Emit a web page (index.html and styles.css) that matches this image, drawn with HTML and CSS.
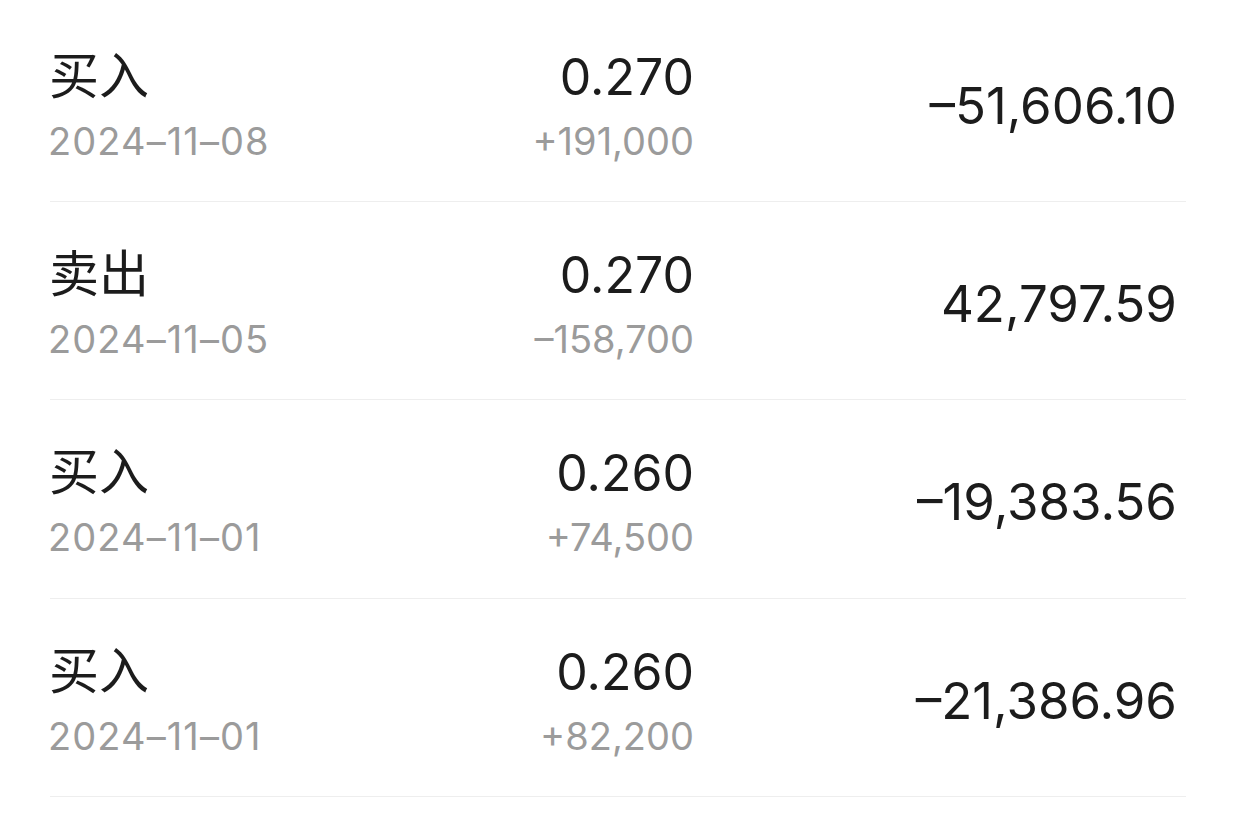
FILE: index.html
```html
<!DOCTYPE html>
<html lang="zh-CN">
<head>
<meta charset="utf-8">
<link rel="stylesheet" href="styles.css">
</head>
<body>
<div class="list">
  <div class="row">
    <div class="col-left">
      <div class="title">买入</div>
      <div class="sub date">2024–11–08</div>
    </div>
    <div class="col-mid">
      <div class="price">0.270</div>
      <div class="sub">+191,000</div>
    </div>
    <div class="col-right"><div class="amount">–51,606.10</div></div>
  </div>
  <div class="row">
    <div class="col-left">
      <div class="title">卖出</div>
      <div class="sub date">2024–11–05</div>
    </div>
    <div class="col-mid">
      <div class="price">0.270</div>
      <div class="sub">–158,700</div>
    </div>
    <div class="col-right"><div class="amount">42,797.59</div></div>
  </div>
  <div class="row">
    <div class="col-left">
      <div class="title">买入</div>
      <div class="sub date">2024–11–01</div>
    </div>
    <div class="col-mid">
      <div class="price">0.260</div>
      <div class="sub">+74,500</div>
    </div>
    <div class="col-right"><div class="amount">–19,383.56</div></div>
  </div>
  <div class="row">
    <div class="col-left">
      <div class="title">买入</div>
      <div class="sub date">2024–11–01</div>
    </div>
    <div class="col-mid">
      <div class="price">0.260</div>
      <div class="sub">+82,200</div>
    </div>
    <div class="col-right"><div class="amount">–21,386.96</div></div>
  </div>
</div>
</body>
</html>
```
FILE: styles.css
```css
html, body {
  margin: 0;
  padding: 0;
  background: #ffffff;
}
body {
  font-family: Inter, "Noto Sans CJK SC", sans-serif;
  color: #1c1c1c;
}
.list {
  padding: 4px 56px 0 50px;
}
.row {
  display: grid;
  grid-template-columns: 402px 242px 1fr;
  align-items: start;
  height: 197.2px;
  border-bottom: 1.5px solid #eeeeee;
}
.col-left, .col-mid {
  display: flex;
  flex-direction: column;
}
.col-left {
  padding-top: 38px;
  gap: 19px;
}
.col-mid {
  padding-top: 43px;
  gap: 14px;
  text-align: right;
}
.col-right {
  padding-top: 72px;
  text-align: right;
  padding-right: 9px;
}
.title {
  font-family: "Noto Sans CJK SC", sans-serif;
  font-size: 50px;
  line-height: 60px;
  margin-left: -1px;
}
.price {
  font-size: 50px;
  line-height: 60px;
}
.sub {
  font-size: 38px;
  line-height: 40px;
  color: #9b9b9b;
}
.date {
  letter-spacing: 1.1px;
  margin-left: -2px;
}
.amount {
  font-size: 51px;
  line-height: 60px;
}
```
